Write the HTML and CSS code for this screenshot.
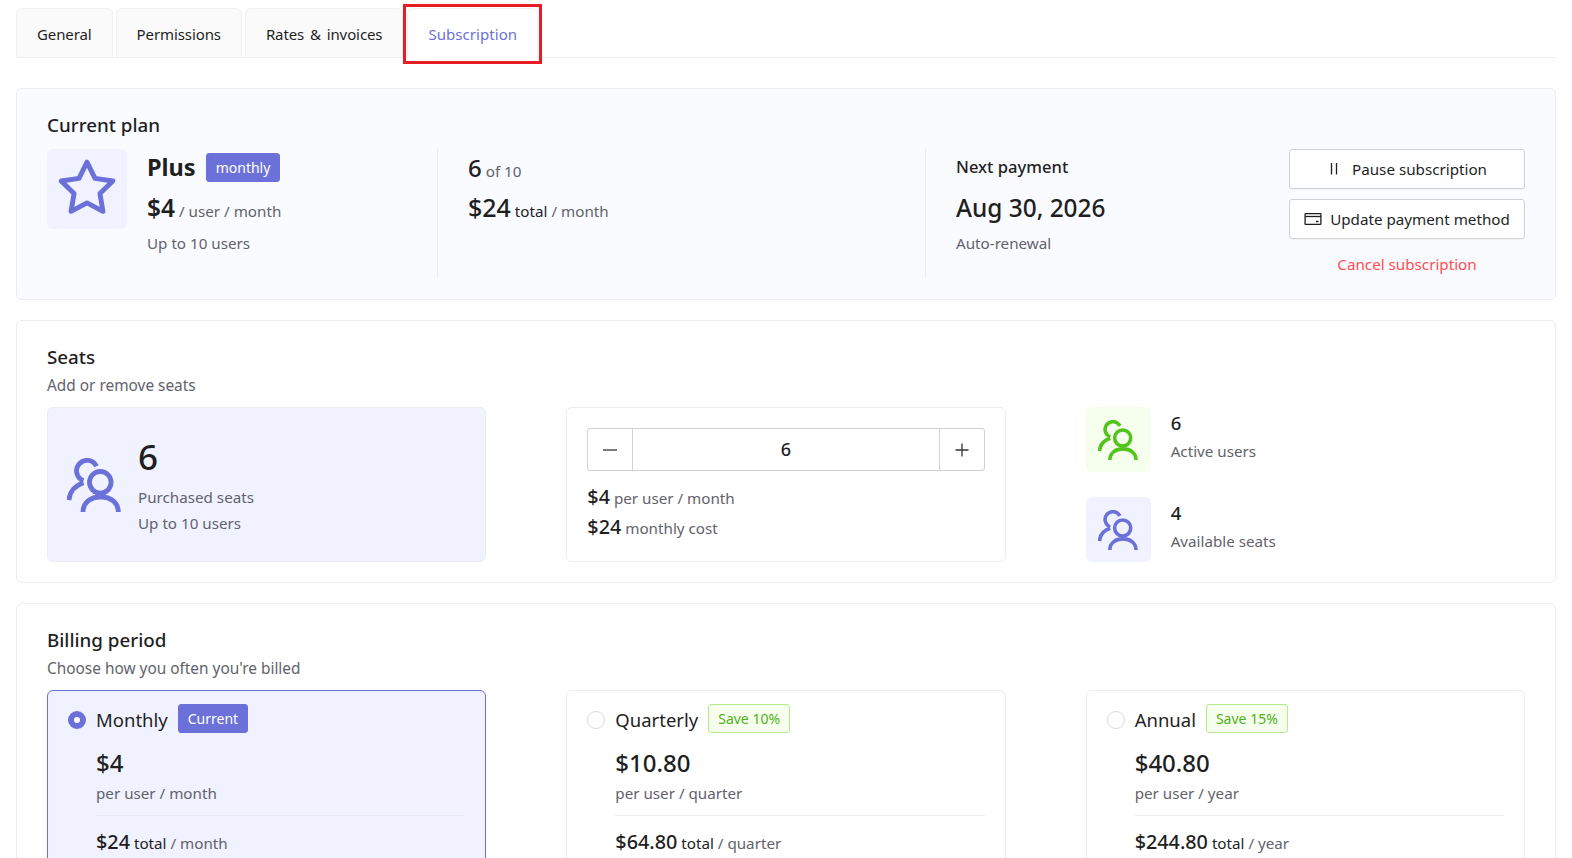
FILE: index.html
```html
<!DOCTYPE html>
<html lang="en">

  <head>
    <meta charset="UTF-8">
    <meta name="viewport" content="width=device-width, initial-scale=1.0">
    <title>Subscription</title>
    <link rel="stylesheet" href="styles.css">
  </head>

  <body>
    <svg class="defs" width="0" height="0">
      <symbol id="users" viewBox="0 0 54 54">
        <g fill="none" stroke="currentColor" stroke-width="4.8">
          <circle cx="33.3" cy="24.3" r="10.8"/>
          <path d="M16 54C16 44.5 23.5 39 33.6 39S51.3 44.5 51.3 54"/>
          <path d="M29.5 8.2A10.5 10.5 0 1 0 16.5 22.7"/>
          <path d="M16.5 24.7C8 27.5 2.5 34 2 42"/>
        </g>
      </symbol>
    </svg>

    <div class="tabs">
      <a class="tab">General</a>
      <a class="tab">Permissions</a>
      <a class="tab">Rates &amp; invoices</a>
      <a class="tab active">Subscription</a>
    </div>
    <div class="highlight"></div>

    <section class="card plan">
      <h2>Current plan</h2>
      <div class="plan-row">
        <div class="plan-main">
          <div class="star-box">
            <svg width="62" height="62" viewBox="0 0 24 24" fill="none" stroke="currentColor" stroke-width="1.9" stroke-linejoin="round">
              <polygon points="12 2 15.09 8.26 22 9.27 17 14.14 18.18 21.02 12 17.77 5.82 21.02 7 14.14 2 9.27 8.91 8.26"/>
            </svg>
          </div>
          <div>
            <div class="plan-name"><strong>Plus</strong><span class="badge">monthly</span></div>
            <div class="price-line main-price"><b>$4</b> <span class="muted">/ user / month</span></div>
            <div class="muted small-line">Up to 10 users</div>
          </div>
        </div>
        <div class="plan-col">
          <div class="count-line"><b>6</b> <span class="muted">of 10</span></div>
          <div class="price-line"><b>$24</b> total <span class="muted">/ month</span></div>
        </div>
        <div class="plan-col next">
          <div class="next-label">Next payment</div>
          <div class="next-date">Aug 30, 2026</div>
          <div class="muted">Auto-renewal</div>
        </div>
        <div class="plan-actions">
          <button class="btn">
            <svg width="14" height="14" viewBox="0 0 14 14" fill="none" stroke="currentColor" stroke-width="1.3"><path d="M4.5 1V12.5M9.5 1V12.5"/></svg>
            <span class="pause-text">Pause subscription</span>
          </button>
          <button class="btn">
            <svg width="18" height="14" viewBox="0 0 18 14" fill="none" stroke="currentColor" stroke-width="1.3"><rect x="1.1" y="1.6" width="15.8" height="10.8" rx="0.6"/><path d="M1.1 4.5H16.9"/><path d="M12 9.5H14.5" stroke-width="1.5"/></svg>
            <span>Update payment method</span>
          </button>
          <a class="cancel">Cancel subscription</a>
        </div>
      </div>
    </section>

    <section class="card">
      <h2>Seats</h2>
      <p class="muted subtitle">Add or remove seats</p>
      <div class="three-col">
        <div class="box seats-box">
          <svg class="users-large" width="54" height="54"><use href="#users"/></svg>
          <div>
            <div class="seats-num">6</div>
            <div class="muted seats-text">Purchased seats</div>
            <div class="muted seats-text">Up to 10 users</div>
          </div>
        </div>
        <div class="box stepper-box">
          <div class="stepper">
            <span class="step-btn">
              <svg width="16" height="16" viewBox="0 0 16 16" stroke="currentColor" stroke-width="1.3"><path d="M1 8H15"/></svg>
            </span>
            <span class="step-value">6</span>
            <span class="step-btn">
              <svg width="16" height="16" viewBox="0 0 16 16" stroke="currentColor" stroke-width="1.3"><path d="M1.5 8H14.5M8 1.5V14.5"/></svg>
            </span>
          </div>
          <div class="cost-line"><b>$4</b> <span class="muted">per user / month</span></div>
          <div class="cost-line"><b>$24</b> <span class="muted">monthly cost</span></div>
        </div>
        <div class="stats">
          <div class="stat">
            <span class="stat-icon green"><svg width="40" height="40"><use href="#users"/></svg></span>
            <div>
              <div class="stat-num">6</div>
              <div class="muted">Active users</div>
            </div>
          </div>
          <div class="stat">
            <span class="stat-icon purple"><svg width="40" height="40"><use href="#users"/></svg></span>
            <div>
              <div class="stat-num">4</div>
              <div class="muted">Available seats</div>
            </div>
          </div>
        </div>
      </div>
    </section>

    <section class="card">
      <h2>Billing period</h2>
      <p class="muted subtitle">Choose how you often you're billed</p>
      <div class="three-col">
        <div class="box period selected">
          <div class="period-head">
            <span class="radio on"></span>
            <span class="period-name">Monthly</span>
            <span class="badge">Current</span>
          </div>
          <div class="period-body">
            <div class="period-price">$4</div>
            <div class="muted">per user / month</div>
            <div class="period-total"><b>$24</b> total <span class="muted">/ month</span></div>
          </div>
        </div>
        <div class="box period">
          <div class="period-head">
            <span class="radio"></span>
            <span class="period-name">Quarterly</span>
            <span class="badge save">Save 10%</span>
          </div>
          <div class="period-body">
            <div class="period-price">$10.80</div>
            <div class="muted">per user / quarter</div>
            <div class="period-total"><b>$64.80</b> total <span class="muted">/ quarter</span></div>
          </div>
        </div>
        <div class="box period">
          <div class="period-head">
            <span class="radio"></span>
            <span class="period-name">Annual</span>
            <span class="badge save">Save 15%</span>
          </div>
          <div class="period-body">
            <div class="period-price">$40.80</div>
            <div class="muted">per user / year</div>
            <div class="period-total"><b>$244.80</b> total <span class="muted">/ year</span></div>
          </div>
        </div>
      </div>
    </section>
  </body>
</html>
```

FILE: styles.css
```css
* {
  box-sizing: border-box;
}

html, body {
  height: 858px;
  overflow: hidden;
}

body {
  margin: 0;
  padding: 8px 16px 0;
  font-family: "Noto Sans", "Open Sans", sans-serif;
  font-size: 15.2px;
  line-height: 24px;
  color: #1f1f1f;
  background: white;
  position: relative;
}

.defs {
  position: absolute;
}

b, strong {
  font-weight: 500;
}

.muted {
  color: #62626b;
}

/* tabs */
.tabs {
  display: flex;
  gap: 3px;
  height: 50px;
  font-size: 15px;
  letter-spacing: -0.1px;
  word-spacing: 2px;
  border-bottom: 1px solid #ececf0;
}

.tab {
  height: 50px;
  padding: 13px 20px 0;
  background: #fafafa;
  border: 1px solid #f0f0f0;
  border-radius: 6px 6px 0 0;
}

.tab.active {
  margin-left: 1px;
  letter-spacing: 0.05px;
  color: #6b71d9;
  background: white;
  border-bottom-color: white;
}

.highlight {
  position: absolute;
  left: 403px;
  top: 4px;
  width: 139px;
  height: 60px;
  border: 3px solid #e81c24;
}

/* cards */
.card {
  margin-top: 20px;
  padding: 22px 30px 20px;
  border: 1px solid #ececf0;
  border-radius: 6px;
}

.tabs + .highlight + .card {
  margin-top: 30px;
}

.plan {
  height: 212px;
  background: #fafbff;
}

h2 {
  margin: 0;
  font-size: 18.8px;
  line-height: 28px;
  font-weight: 500;
}

.subtitle {
  margin: 0;
  line-height: 28px;
  padding-top: 1px;
  padding-bottom: 7px;
  font-size: 15.4px;
}

.plan-row {
  display: grid;
  grid-template-columns: 390px 488px 1fr 236px;
  margin-top: 10px;
  height: 129px;
}

.plan-main {
  display: flex;
  gap: 20px;
}

.star-box {
  width: 80px;
  height: 80px;
  padding-bottom: 2px;
  display: flex;
  align-items: center;
  justify-content: center;
  color: #6b71d9;
  background: #f0f2ff;
  border-radius: 6px;
}

.plan-name {
  display: flex;
  align-items: center;
  gap: 10px;
  height: 36px;
}

.plan-name strong {
  font-size: 23.5px;
  font-weight: 700;
}

.badge {
  display: inline-block;
  height: 29px;
  padding: 0 9px;
  font-size: 14px;
  line-height: 27px;
  color: white;
  background: #6b71d9;
  border: 1px solid #6b71d9;
  border-radius: 3px;
}

.badge.save {
  color: #52b01a;
  background: #f6ffed;
  border-color: #b7eb8f;
}

.price-line {
  margin-top: 5px;
  line-height: 35px;
}

.price-line b {
  font-size: 25px;
}

.main-price b {
  font-size: 24.5px;
  font-weight: 600;
}

.small-line {
  margin-top: 2px;
}

.plan-col {
  padding-left: 30px;
  border-left: 1px solid #ececf0;
}

.count-line {
  height: 36px;
  line-height: 38px;
}

.count-line b {
  font-size: 24px;
}

.next-label {
  height: 36px;
  font-size: 16.6px;
  line-height: 36px;
  font-weight: 500;
}

.next-date {
  margin-top: 5px;
  font-size: 24.4px;
  line-height: 36px;
  font-weight: 500;
}

.next .muted {
  margin-top: 5px;
}

.plan-actions {
  display: flex;
  flex-direction: column;
  gap: 10px;
  align-items: stretch;
}

.btn {
  display: flex;
  align-items: center;
  justify-content: center;
  gap: 8px;
  height: 40px;
  padding: 0;
  font: inherit;
  color: #1f1f1f;
  background: white;
  border: 1px solid #d0d0d8;
  border-radius: 3px;
  box-shadow: 0 1px 0 rgba(0, 0, 0, 0.03);
}

.pause-text {
  margin-left: 3px;
}

.cancel {
  margin-top: 3px;
  text-align: center;
  color: #ff4d4f;
}

/* three column rows */
.three-col {
  display: grid;
  grid-template-columns: repeat(3, 1fr);
  gap: 80px;
}

.box {
  border: 1px solid #ececf0;
  border-radius: 6px;
}

.seats-box {
  display: flex;
  align-items: center;
  gap: 17px;
  height: 155px;
  padding-left: 19px;
  background: #f0f2ff;
}

.users-large {
  color: #6b71d9;
}

.seats-num {
  margin-bottom: 4px;
  font-size: 35px;
  line-height: 46px;
  font-weight: 500;
}

.seats-text {
  line-height: 26px;
}

.stepper-box {
  height: 155px;
  padding: 20px;
}

.stepper {
  display: flex;
  height: 43px;
  margin-bottom: 12px;
  border: 1px solid #d0d0d8;
  border-radius: 3px;
}

.step-btn {
  width: 44px;
  display: flex;
  align-items: center;
  justify-content: center;
  color: #333;
}

.step-value {
  flex: 1;
  text-align: center;
  font-size: 18px;
  font-weight: 500;
  line-height: 41px;
  border-left: 1px solid #d0d0d8;
  border-right: 1px solid #d0d0d8;
}

.cost-line {
  height: 30px;
  line-height: 28px;
}

.cost-line b {
  font-size: 19.8px;
}

.stats {
  display: flex;
  flex-direction: column;
  gap: 25px;
}

.stat {
  display: flex;
  gap: 20px;
  height: 65px;
}

.stat-icon {
  width: 65px;
  height: 65px;
  display: flex;
  align-items: center;
  justify-content: center;
  border-radius: 6px;
}

.stat-icon.green {
  color: #52c41a;
  background: #f6ffed;
}

.stat-icon.purple {
  color: #6b71d9;
  background: #f0f2ff;
}

.stat-num {
  margin-top: 2px;
  margin-bottom: 2px;
  font-size: 18.5px;
  line-height: 28px;
  font-weight: 500;
}

/* billing periods */
.period {
  height: 220px;
  padding: 13px 20px;
}

.period.selected {
  background: #f0f2ff;
  border-color: #6b71d9;
}

.period-head {
  display: flex;
  align-items: center;
  height: 29px;
}

.radio {
  width: 18px;
  height: 18px;
  margin-top: 2px;
  margin-right: 10px;
  border: 1px solid #d9d9de;
  border-radius: 50%;
  background: white;
  flex-shrink: 0;
}

.radio.on {
  border: 6px solid #6b71d9;
}

.period-name {
  margin-right: 10px;
  padding-top: 2px;
  font-size: 18.5px;
}

.period-body {
  margin-left: 28px;
}

.period-price {
  margin-top: 12px;
  font-size: 24px;
  line-height: 36px;
  font-weight: 500;
}

.period-total {
  margin-top: 10px;
  padding-top: 14px;
  border-top: 1px solid #ececf0;
}

.period-total b {
  font-size: 19.8px;
}

.selected .period-total {
  border-top-color: #e6e8f5;
}
```
